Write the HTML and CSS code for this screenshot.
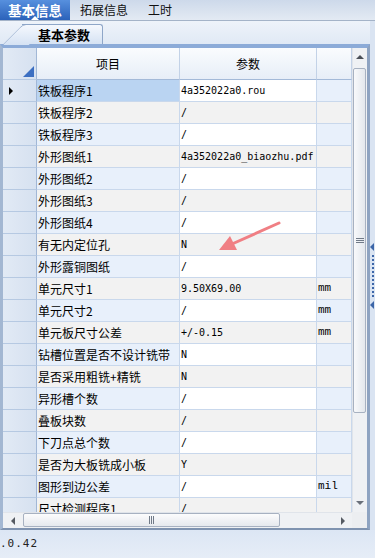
FILE: index.html
```html
<!DOCTYPE html>
<html lang="zh-CN">
<head>
    <meta charset="UTF-8">
    <meta name="viewport" content="width=device-width, initial-scale=1.0">
    <title>基本信息</title>
    <link rel="stylesheet" href="styles.css">
</head>
<body>
    <!-- top tabs -->
    <div class="tabbar">
        <div class="tab active">基本信息</div>
        <div class="tab">拓展信息</div>
        <div class="tab">工时</div>
    </div>

    <div class="content">
        <div class="left">
            <div class="subtabs">
                <div class="subtab"><span>基本参数</span></div>
            </div>

            <div class="frame">
                <div class="table">
                    <div class="row head">
                        <div class="rh corner"><span class="corner-tri"></span></div>
                        <div class="c1">项目</div>
                        <div class="c2">参数</div>
                        <div class="c3"></div>
                    </div>
                    <div class="body">
                        <div class="row selected"><div class="rh"><span class="cur"></span></div><div class="c1">铁板程序1</div><div class="c2">4a352022a0.rou</div><div class="c3"></div></div>
                        <div class="row"><div class="rh"></div><div class="c1">铁板程序2</div><div class="c2">/</div><div class="c3"></div></div>
                        <div class="row"><div class="rh"></div><div class="c1">铁板程序3</div><div class="c2">/</div><div class="c3"></div></div>
                        <div class="row"><div class="rh"></div><div class="c1">外形图纸1</div><div class="c2">4a352022a0_biaozhu.pdf</div><div class="c3"></div></div>
                        <div class="row"><div class="rh"></div><div class="c1">外形图纸2</div><div class="c2">/</div><div class="c3"></div></div>
                        <div class="row"><div class="rh"></div><div class="c1">外形图纸3</div><div class="c2">/</div><div class="c3"></div></div>
                        <div class="row"><div class="rh"></div><div class="c1">外形图纸4</div><div class="c2">/</div><div class="c3"></div></div>
                        <div class="row"><div class="rh"></div><div class="c1">有无内定位孔</div><div class="c2">N</div><div class="c3"></div></div>
                        <div class="row"><div class="rh"></div><div class="c1">外形露铜图纸</div><div class="c2">/</div><div class="c3"></div></div>
                        <div class="row"><div class="rh"></div><div class="c1">单元尺寸1</div><div class="c2">9.50X69.00</div><div class="c3">mm</div></div>
                        <div class="row"><div class="rh"></div><div class="c1">单元尺寸2</div><div class="c2">/</div><div class="c3">mm</div></div>
                        <div class="row"><div class="rh"></div><div class="c1">单元板尺寸公差</div><div class="c2">+/-0.15</div><div class="c3">mm</div></div>
                        <div class="row"><div class="rh"></div><div class="c1">钻槽位置是否不设计铣带</div><div class="c2">N</div><div class="c3"></div></div>
                        <div class="row"><div class="rh"></div><div class="c1">是否采用粗铣+精铣</div><div class="c2">N</div><div class="c3"></div></div>
                        <div class="row"><div class="rh"></div><div class="c1">异形槽个数</div><div class="c2">/</div><div class="c3"></div></div>
                        <div class="row"><div class="rh"></div><div class="c1">叠板块数</div><div class="c2">/</div><div class="c3"></div></div>
                        <div class="row"><div class="rh"></div><div class="c1">下刀点总个数</div><div class="c2">/</div><div class="c3"></div></div>
                        <div class="row"><div class="rh"></div><div class="c1">是否为大板铣成小板</div><div class="c2">Y</div><div class="c3"></div></div>
                        <div class="row"><div class="rh"></div><div class="c1">图形到边公差</div><div class="c2">/</div><div class="c3">mil</div></div>
                        <div class="row"><div class="rh"></div><div class="c1">尺寸检测程序1</div><div class="c2">/</div><div class="c3"></div></div>
                    </div>
                </div>

                <div class="vscroll">
                    <div class="vbtn"><span class="tri-up"></span></div>
                    <div class="vthumb"><span class="grip-h"></span></div>
                    <div class="spacer"></div>
                    <div class="vbtn"><span class="tri-down"></span></div>
                </div>

                <div class="hscroll">
                    <div class="hbtn"><span class="tri-left"></span></div>
                    <div class="hthumb"><span class="grip-v"></span></div>
                    <div class="spacer"></div>
                    <div class="hbtn"><span class="tri-right"></span></div>
                </div>

                <div class="scorner"></div>
            </div>
        </div>

        <div class="splitter">
            <span class="sp-arrow"></span>
            <span class="sp-dots"></span>
            <span class="sp-arrow"></span>
        </div>
    </div>

    <div class="status">.0.42</div>

    <!-- red annotation arrow -->
    <svg class="annot" width="375" height="558" viewBox="0 0 375 558">
        <line x1="279" y1="223" x2="232" y2="244" stroke="#f07f84" stroke-width="3" stroke-linecap="round"/>
        <polygon points="219,250 230,236 237,250" fill="#f07f84"/>
    </svg>
</body>
</html>
```

FILE: styles.css
```css
* {
    margin: 0;
    padding: 0;
    box-sizing: border-box;
}

body {
    width: 375px;
    height: 558px;
    overflow: hidden;
    position: relative;
    font-family: "Noto Sans CJK SC", sans-serif;
    font-size: 12px;
    color: #000;
    background: #dfe8f4;
}

/* top tabs */
.tabbar {
    height: 21px;
    display: flex;
    background: linear-gradient(#cdd9ea, #e3eaf3);
    border-bottom: 1px solid #a4b3c8;
}

.tab {
    padding: 0 10px;
    line-height: 20px;
    font-size: 12px;
    color: #111;
}

.tab.active {
    width: 70px;
    padding: 0;
    text-align: center;
    position: relative;
    font-size: 13.5px;
    font-weight: bold;
    color: #fff;
    background: linear-gradient(#5790de, #2b62ba);
}

.tab.active::after {
    content: "";
    position: absolute;
    left: 31px;
    bottom: 0;
    border-left: 4px solid transparent;
    border-right: 4px solid transparent;
    border-bottom: 4px solid #fff;
}

.content {
    display: flex;
    height: 509px;
}

.left {
    width: 370px;
}

/* sub tab */
.subtabs {
    height: 23px;
    padding-left: 22px;
    display: flex;
    align-items: flex-end;
    background: linear-gradient(#eef3fa, #e0e9f5);
}

.subtab {
    position: relative;
    width: 81px;
    height: 20px;
    padding-left: 16px;
    line-height: 19px;
    font-size: 13px;
    font-weight: bold;
    border-top: 1px solid #8ea6c8;
    border-right: 1px solid #8ea6c8;
    border-top-right-radius: 3px;
    background: linear-gradient(#f5f8fd, #d5e2f3);
}

.subtab::before {
    content: "";
    position: absolute;
    left: -20px;
    top: -1px;
    width: 26px;
    height: 20px;
    border-left: 1px solid #8ea6c8;
    border-top: 1px solid #8ea6c8;
    border-top-left-radius: 4px;
    background: linear-gradient(#f5f8fd, #d5e2f3);
    transform: skewX(-45deg);
    transform-origin: bottom left;
}

.subtab span {
    position: relative;
}

/* grid frame */
.frame {
    height: 486px;
    display: grid;
    grid-template-columns: 349px 15px;
    grid-template-rows: 464px 16px;
    border-left: 3px solid #a3b7d2;
    border-top: 4px solid #8cabd8;
    border-right: 3px solid #8ea3c1;
    border-bottom: 2px solid #7f93b0;
    background: #fff;
}

.table {
    overflow: hidden;
}

.row {
    display: grid;
    grid-template-columns: 34px 143px 137px 35px;
    height: 22px;
}

.row > div {
    border-bottom: 1px solid #c9d8ec;
    border-right: 1px solid #c9d8ec;
    line-height: 21px;
    white-space: nowrap;
    overflow: hidden;
}

.row.head {
    height: 32px;
    background: linear-gradient(#fafcfe, #e6edf7);
}

.row.head > div {
    line-height: 31px;
    text-align: center;
    border-right-color: #c3d2e7;
    border-bottom-color: #a3b9d8;
}

.rh {
    background: linear-gradient(90deg, #e2eaf5, #d6e1f0);
    border-right-color: #a1b7d6 !important;
    border-bottom-color: #b6c9e2 !important;
    display: flex;
    align-items: center;
    padding-left: 6px;
}

.rh.corner {
    align-items: flex-end;
    justify-content: flex-end;
    padding: 0 2px 2px 0;
}

.corner-tri {
    width: 0;
    height: 0;
    border-left: 11px solid transparent;
    border-bottom: 11px solid #3c6fc2;
}

.cur {
    width: 0;
    height: 0;
    border-left: 4px solid #000;
    border-top: 4px solid transparent;
    border-bottom: 4px solid transparent;
}

.body {
    height: 432px;
    overflow: hidden;
}

.body .c1 {
    padding-left: 1px;
}

.body .c2 {
    padding-left: 1px;
    font-family: "DejaVu Sans Mono", "Liberation Mono", monospace;
    font-size: 10px;
    color: #000;
}

.body .c3 {
    padding-left: 1px;
    font-family: "Liberation Mono", monospace;
    font-size: 11px;
    color: #000;
}

.body .row:nth-child(odd) .c1,
.body .row:nth-child(odd) .c3 {
    background: #e8f0fb;
}

.body .row:nth-child(even) .c1,
.body .row:nth-child(even) .c2,
.body .row:nth-child(even) .c3 {
    background: #f2f2f2;
}

.body .row.selected .c1 {
    background: #bad4f2;
}

/* scrollbars */
.vscroll {
    grid-row: 1;
    grid-column: 2;
    display: flex;
    flex-direction: column;
    background: #eff1f4;
    border-left: 1px solid #e0e4ea;
}

.vbtn {
    height: 18px;
    display: flex;
    align-items: center;
    justify-content: center;
}

.vthumb {
    height: 345px;
    margin: 2px 1px 0 0;
    border: 1px solid #a7b1c1;
    border-radius: 2px;
    background: linear-gradient(90deg, #f8f9fb, #e3e7ed);
    display: flex;
    align-items: center;
    justify-content: center;
}

.grip-h {
    width: 8px;
    height: 5px;
    border-top: 1px solid #707a88;
    border-bottom: 1px solid #707a88;
    position: relative;
}

.grip-h::after {
    content: "";
    position: absolute;
    left: 0;
    right: 0;
    top: 1px;
    border-top: 1px solid #707a88;
}

.spacer {
    flex: 1;
}

.tri-up {
    border-left: 4px solid transparent;
    border-right: 4px solid transparent;
    border-bottom: 4px solid #4a4f57;
}

.tri-down {
    border-left: 4px solid transparent;
    border-right: 4px solid transparent;
    border-top: 4px solid #6a707a;
}

.hscroll {
    grid-row: 2;
    grid-column: 1;
    display: flex;
    background: #eff1f4;
    border-top: 1px solid #e0e4ea;
}

.hbtn {
    width: 19px;
    display: flex;
    align-items: center;
    justify-content: center;
}

.hthumb {
    width: 257px;
    margin: 0 0 1px 1px;
    border: 1px solid #a7b1c1;
    border-radius: 2px;
    background: linear-gradient(#fcfcfd, #e6e9ee);
    display: flex;
    align-items: center;
    justify-content: center;
}

.grip-v {
    width: 5px;
    height: 8px;
    border-left: 1px solid #707a88;
    border-right: 1px solid #707a88;
    position: relative;
}

.grip-v::after {
    content: "";
    position: absolute;
    top: 0;
    bottom: 0;
    left: 1px;
    border-left: 1px solid #707a88;
}

.tri-left {
    border-top: 4px solid transparent;
    border-bottom: 4px solid transparent;
    border-right: 4px solid #555a62;
}

.tri-right {
    border-top: 4px solid transparent;
    border-bottom: 4px solid transparent;
    border-left: 4px solid #555a62;
}

.scorner {
    grid-row: 2;
    grid-column: 2;
    background: #eceef1;
}

/* splitter on the right */
.splitter {
    width: 5px;
    display: flex;
    flex-direction: column;
    align-items: flex-start;
    padding-top: 222px;
    background: #dae4f2;
}

.sp-arrow {
    border-top: 4px solid transparent;
    border-bottom: 4px solid transparent;
    border-right: 4px solid #3d66a8;
}

.sp-dots {
    height: 42px;
    margin: 4px 0 4px 2px;
    border-left: 2px dotted #3d66a8;
}

.status {
    height: 28px;
    line-height: 28px;
    font-family: "DejaVu Sans Mono", "Liberation Mono", monospace;
    font-size: 11px;
    letter-spacing: 1px;
    color: #222;
    background: linear-gradient(#dce6f4, #e6edf7);
}

.annot {
    position: absolute;
    left: 0;
    top: 0;
    pointer-events: none;
}
```
